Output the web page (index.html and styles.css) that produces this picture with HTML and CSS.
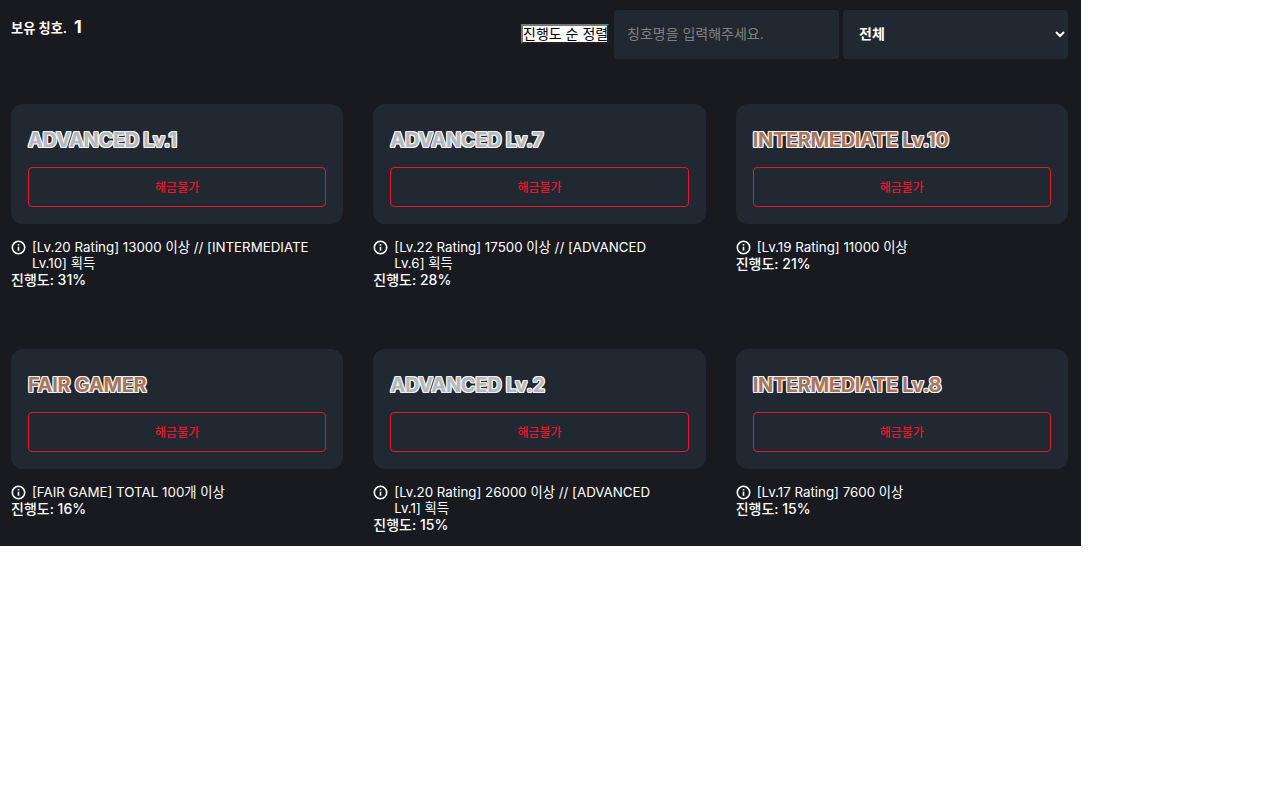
FILE: index.html
```html
<!DOCTYPE html>
<html lang="ko">
<head>
  <meta charset="UTF-8" />
  <title>칭호</title>
  <link rel="stylesheet" href="styles.css">
</head>
<body>

<div class="page">
  <div class="toolbar">
    <p class="owned">보유 칭호. <strong>1</strong></p>
    <div class="filters">
      <button type="button" class="sort">진행도 순 정렬</button>
      <input type="text" class="search" placeholder="칭호명을 입력해주세요." />
      <select class="category">
        <option>전체</option>
      </select>
    </div>
  </div>

  <div class="titles">
    <div class="item">
      <div class="card">
        <h3 class="name advanced">ADVANCED Lv.1</h3>
        <button type="button" class="locked">해금불가</button>
      </div>
      <div class="desc">
        <svg class="info" viewBox="0 0 16 16"><circle cx="8" cy="8" r="6.6"/><path d="M8 7.2v4.2M8 4.2v1.6"/></svg>
        <span>[Lv.20 Rating] 13000 이상 // [INTERMEDIATE Lv.10] 획득</span>
      </div>
      <p class="progress">진행도: 31%</p>
    </div>

    <div class="item">
      <div class="card">
        <h3 class="name advanced">ADVANCED Lv.7</h3>
        <button type="button" class="locked">해금불가</button>
      </div>
      <div class="desc">
        <svg class="info" viewBox="0 0 16 16"><circle cx="8" cy="8" r="6.6"/><path d="M8 7.2v4.2M8 4.2v1.6"/></svg>
        <span>[Lv.22 Rating] 17500 이상 // [ADVANCED Lv.6] 획득</span>
      </div>
      <p class="progress">진행도: 28%</p>
    </div>

    <div class="item">
      <div class="card">
        <h3 class="name intermediate">INTERMEDIATE Lv.10</h3>
        <button type="button" class="locked">해금불가</button>
      </div>
      <div class="desc">
        <svg class="info" viewBox="0 0 16 16"><circle cx="8" cy="8" r="6.6"/><path d="M8 7.2v4.2M8 4.2v1.6"/></svg>
        <span>[Lv.19 Rating] 11000 이상</span>
      </div>
      <p class="progress">진행도: 21%</p>
    </div>

    <div class="item">
      <div class="card">
        <h3 class="name intermediate">FAIR GAMER</h3>
        <button type="button" class="locked">해금불가</button>
      </div>
      <div class="desc">
        <svg class="info" viewBox="0 0 16 16"><circle cx="8" cy="8" r="6.6"/><path d="M8 7.2v4.2M8 4.2v1.6"/></svg>
        <span>[FAIR GAME] TOTAL 100개 이상</span>
      </div>
      <p class="progress">진행도: 16%</p>
    </div>

    <div class="item">
      <div class="card">
        <h3 class="name advanced">ADVANCED Lv.2</h3>
        <button type="button" class="locked">해금불가</button>
      </div>
      <div class="desc">
        <svg class="info" viewBox="0 0 16 16"><circle cx="8" cy="8" r="6.6"/><path d="M8 7.2v4.2M8 4.2v1.6"/></svg>
        <span>[Lv.20 Rating] 26000 이상 // [ADVANCED Lv.1] 획득</span>
      </div>
      <p class="progress">진행도: 15%</p>
    </div>

    <div class="item">
      <div class="card">
        <h3 class="name intermediate">INTERMEDIATE Lv.8</h3>
        <button type="button" class="locked">해금불가</button>
      </div>
      <div class="desc">
        <svg class="info" viewBox="0 0 16 16"><circle cx="8" cy="8" r="6.6"/><path d="M8 7.2v4.2M8 4.2v1.6"/></svg>
        <span>[Lv.17 Rating] 7600 이상</span>
      </div>
      <p class="progress">진행도: 15%</p>
    </div>
  </div>
</div>

</body>
</html>
```

FILE: styles.css
```css
body {
  margin: 0;
  background-color: #fff;
  font-family: Inter, "Noto Sans CJK KR", sans-serif;
}

.page {
  width: 1081px;
  box-sizing: border-box;
  padding: 10px 13px 13px 11px;
  background-color: #191a1f;
  color: #fff;
}

.toolbar {
  display: flex;
  justify-content: space-between;
  align-items: flex-start;
  margin-bottom: 45px;
}

.owned {
  margin: 6px 0 0;
  font-size: 13.2px;
  font-weight: 600;
  line-height: 22px;
}

.owned strong {
  margin-left: 4px;
  font-size: 18px;
  font-weight: 700;
}

.filters {
  display: flex;
  align-items: center;
  gap: 4px;
}

.sort {
  width: 88px;
  height: 20px;
  padding: 0;
  margin: 0 1px 1px 0;
  border: 2px outset #767676;
  background-color: #fff;
  color: #000;
  font-family: inherit;
  font-size: 14px;
  line-height: 16px;
  white-space: nowrap;
}

.search,
.category {
  width: 225px;
  height: 49px;
  box-sizing: border-box;
  border: none;
  border-radius: 4px;
  background-color: #222831;
  color: #fff;
  font-family: inherit;
  font-size: 14px;
}

.search {
  padding: 0 13px 2px;
}

.search::placeholder {
  color: #808080;
}

.category {
  padding: 0 12px 2px;
  font-weight: 600;
}

.titles {
  display: grid;
  grid-template-columns: repeat(3, 1fr);
  column-gap: 30px;
  row-gap: 61px;
}

.card {
  padding: 17px;
  border-radius: 12px;
  background-color: #222831;
}

.name {
  margin: 5px 0 13px;
  font-size: 20px;
  font-weight: 700;
  line-height: 28px;
  letter-spacing: -0.32px;
  color: #b4b8c0;
  text-shadow: -1px -1px #f2f2f2, 1px -1px #f2f2f2, -1px 1px #f2f2f2, 1px 1px #f2f2f2,
    -1px 0 #f2f2f2, 1px 0 #f2f2f2, 0 -1px #f2f2f2, 0 1px #f2f2f2;
}

.name.intermediate {
  color: #a8765a;
}

.locked {
  display: block;
  width: 100%;
  height: 40px;
  padding: 0 0 2px;
  box-sizing: border-box;
  border: 1px solid #e3182d;
  border-radius: 4px;
  background: none;
  color: #e3182d;
  font-family: inherit;
  font-size: 12px;
  font-weight: 500;
}

.desc {
  display: flex;
  align-items: flex-start;
  gap: 6px;
  margin: 15px 30px 1px 0;
  font-size: 13.33px;
  line-height: 16px;
}

.info {
  flex: none;
  width: 15px;
  height: 15px;
  margin-top: 1px;
  fill: none;
  stroke: #fff;
  stroke-width: 1.7;
}

.progress {
  margin: 0;
  font-size: 14px;
  font-weight: 500;
  line-height: 16px;
}
```
